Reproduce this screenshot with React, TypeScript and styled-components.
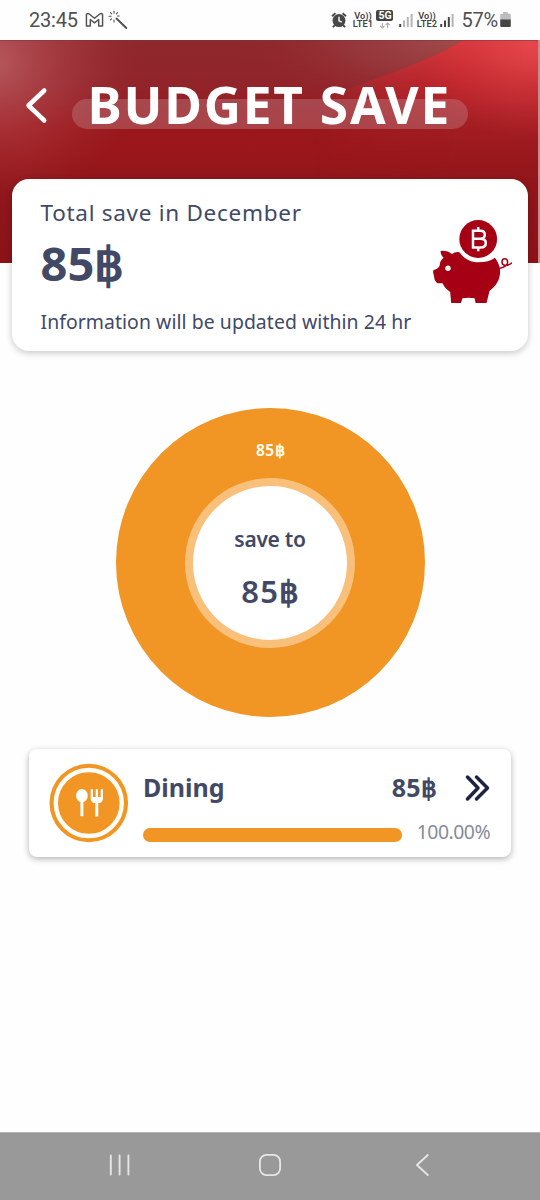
import React from "react";
import styled, { createGlobalStyle } from "styled-components";

const Global = createGlobalStyle`
  *, *::before, *::after { box-sizing: border-box; }
  body { margin: 0; background: #fff; font-family: "Noto Sans", "Open Sans", sans-serif; }
  svg { display: block; flex: none; }
`;

const Screen = styled.div`
  width: 540px;
  height: 1200px;
  display: flex;
  flex-direction: column;
  background: #fefefe;
  overflow: hidden;
`;

const StatusBar = styled.div`
  height: 40px;
  flex: none;
  display: flex;
  justify-content: space-between;
  padding: 0 29px 0 29px;
  font-family: Roboto, sans-serif;
  color: #505050;
`;

const StatusGroup = styled.div`
  display: flex;
  align-items: center;
`;

const StatusText = styled.span<{ $spacing: number }>`
  font-size: 20px;
  line-height: 40px;
  letter-spacing: ${(p) => p.$spacing}px;
`;

const Header = styled.header`
  position: relative;
  height: 223px;
  width: 538px;
  flex: none;
  background: linear-gradient(#8e282d 0, #91242a 45px, #9a181c 85px, #99171a 115px, #90161a 145px, #8b1318 223px);
  box-shadow: 2px 0 0 #c98a8c;
`;

const HeaderArt = styled.svg`
  position: absolute;
  inset: 0;
`;

const TitleRow = styled.div`
  position: relative;
  display: flex;
  align-items: flex-start;
  padding: 46px 0 0 24px;
`;

const TitlePill = styled.div`
  width: 396px;
  height: 30px;
  margin: 13px 0 0 22px;
  border-radius: 15px;
  background: rgba(190, 125, 132, 0.43);
  display: flex;
  align-items: center;
  padding-left: 15.5px;
`;

const Title = styled.h1`
  margin: 0;
  padding-bottom: 21px;
  font-size: 51.5px;
  line-height: 60px;
  letter-spacing: 1.75px;
  font-weight: 700;
  color: #fff;
  white-space: nowrap;
`;

const SummaryCard = styled.section`
  position: relative;
  flex: none;
  width: 516px;
  height: 172px;
  margin: -84px 0 0 12px;
  padding: 17px 16px 0 28.5px;
  border-radius: 17px;
  background: #fff;
  box-shadow: 0 2px 7px rgba(0, 0, 0, 0.22);
  display: flex;
  justify-content: space-between;
  color: #414966;
  white-space: nowrap;
`;

const SummaryText = styled.div`
  display: flex;
  flex-direction: column;
`;

const SummaryLabel = styled.div`
  font-size: 22.5px;
  line-height: 33px;
  letter-spacing: 0.72px;
`;

const SummaryAmount = styled.div`
  font-size: 47px;
  line-height: 64px;
  font-weight: 700;
  margin-top: 2px;
`;

const SummaryNote = styled.div`
  font-size: 19.4px;
  line-height: 28px;
  letter-spacing: 0.07px;
  margin-top: 13px;
`;

const PiggyBox = styled.div`
  padding-top: 23px;
`;

const Donut = styled.div`
  flex: none;
  align-self: center;
  width: 309px;
  height: 309px;
  margin-top: 57px;
  border-radius: 50%;
  background: #f19524;
  display: flex;
  flex-direction: column;
  align-items: center;
`;

const SliceLabel = styled.div`
  margin-top: 30px;
  height: 40px;
  font-size: 15.5px;
  line-height: 24px;
  letter-spacing: 0.5px;
  padding-left: 1px;
  font-weight: 700;
  color: #fffbe6;
`;

const DonutHole = styled.div`
  width: 170px;
  height: 170px;
  border: 8px solid #f8c07b;
  border-radius: 50%;
  background: #fff;
  display: flex;
  flex-direction: column;
  align-items: center;
  color: #414966;
  white-space: nowrap;
`;

const HoleCaption = styled.div`
  margin-top: 38px;
  font-size: 21px;
  line-height: 30px;
  font-weight: 600;
  letter-spacing: -0.3px;
`;

const HoleAmount = styled.div`
  margin-top: 17px;
  font-size: 31px;
  line-height: 40px;
  font-weight: 600;
  letter-spacing: 1.4px;
  padding-left: 2px;
`;

const CategoryCard = styled.section`
  flex: none;
  width: 482px;
  height: 108px;
  margin: 32px 0 0 29px;
  padding: 14px 21px 0 20px;
  border-radius: 8px;
  background: #fff;
  box-shadow: 0 2px 6px rgba(0, 0, 0, 0.3);
  display: flex;
  gap: 14px;
`;

const CategoryBody = styled.div`
  flex: 1;
  color: #414966;
`;

const CategoryLine = styled.div`
  display: flex;
  align-items: center;
  height: 50px;
  font-size: 25px;
  font-weight: 700;
`;

const CategoryName = styled.span`
  flex: 1;
  padding-bottom: 2px;
`;

const CategoryAmount = styled.span`
  padding-bottom: 2px;
  margin-right: 28px;
  letter-spacing: 0.2px;
`;

const ProgressLine = styled.div`
  display: flex;
  align-items: center;
  justify-content: space-between;
  margin-top: 3px;
  height: 31px;
`;

const Track = styled.div`
  width: 259px;
  height: 14px;
  margin-top: 7px;
  border-radius: 7px;
  background: #eee;
`;

const Fill = styled.div`
  height: 100%;
  border-radius: 7px;
  background: #f19524;
`;

const Percent = styled.span`
  font-size: 19.4px;
  line-height: 26px;
  letter-spacing: -0.5px;
  color: #858b9c;
`;

const NavBar = styled.nav`
  flex: none;
  height: 68px;
  margin-top: auto;
  border-top: 1px solid #b4b4b4;
  background: #999;
  display: flex;
  align-items: center;
  justify-content: space-between;
  padding: 0 110px 3px 108px;
`;

const HomeSlot = styled.div`
  margin-right: 6px;
`;

const MailIcon = () => (
  <svg width="19" height="16" viewBox="0 0 20 16" fill="none" stroke="#505050" strokeWidth="1.5" strokeLinejoin="round">
    <path d="M1.5 2.2Q2.6 .6 4.4 1.7L10 6.2 15.6 1.7Q17.4 .6 18.5 2.2V14.3H14.4V7.5L10 11 5.6 7.5V14.3H1.5Z" />
  </svg>
);

const WandIcon = () => (
  <svg width="21" height="20" viewBox="0 0 21 20" fill="none" stroke="#505050" strokeLinecap="round">
    <path d="M8.5 8.5L18.3 18" strokeWidth="1.9" />
    <path d="M6 1V3.2M6 10V12M1 6.2H3M9.5 6H11.2M2.4 2.6L3.7 3.8M9.5 2.6L8.4 3.8M2.4 9.9L3.6 8.8" strokeWidth="1.1" />
  </svg>
);

const AlarmIcon = () => (
  <svg width="16" height="16" viewBox="0 0 16 16">
    <circle cx="8" cy="8.6" r="6.5" fill="#484848" />
    <path d="M1 4.3L4.4 1.3M15 4.3L11.6 1.3M3.8 13.2L2 15.2M12.2 13.2L14 15.2" stroke="#484848" strokeWidth="1.9" />
    <path d="M8 4.8V8.8L10.8 10.2" stroke="#fff" strokeWidth="1.4" fill="none" />
  </svg>
);

const LteBox = styled.div`
  width: 21px;
  font-size: 9.3px;
  line-height: 8.5px;
  font-weight: 600;
  text-align: center;
  color: #454545;
`;

const FiveG = styled.div`
  display: flex;
  flex-direction: column;
  align-items: center;
  gap: 1px;
  width: 17px;
  margin: 0 6px 2px 2px;
`;

const FiveGBadge = styled.div`
  width: 17px;
  height: 11px;
  border-radius: 2px;
  background: #444;
  color: #fff;
  font-size: 10.5px;
  line-height: 11px;
  font-weight: 700;
  text-align: center;
`;

const Spacer = styled.div<{ $w: number }>`
  width: ${(p) => p.$w}px;
  flex: none;
`;

const Arrows = () => (
  <svg width="14" height="7" viewBox="0 0 14 8" fill="none" stroke="#aaa" strokeWidth="1.2">
    <path d="M4 1V7M1.5 4.5L4 7 6.5 4.5M10 7V1M7.5 3.5L10 1 12.5 3.5" />
  </svg>
);

const Signal = ({ level }: { level: number }) => (
  <svg width="14" height="14" viewBox="0 0 14 14">
    {[3, 6.5, 10, 13].map((h, i) => (
      <rect key={h} x={0.2 + i * 3.8} y={14 - h} width="2" height={h} fill={i < level ? "#454545" : "#b5b5b5"} />
    ))}
  </svg>
);

const Battery = () => (
  <svg width="11" height="16" viewBox="0 0 11 16">
    <path d="M3.2 0H7.8V1.7H9.5Q10.8 1.7 10.8 3V8H.2V3Q.2 1.7 1.5 1.7H3.2Z" fill="#bdbdbd" />
    <path d="M.2 7.5H10.8V13.7Q10.8 15 9.5 15H1.5Q.2 15 .2 13.7Z" fill="#444" />
  </svg>
);

const HeaderBackdrop = () => (
  <HeaderArt width="538" height="223" viewBox="0 0 538 223">
    <defs>
      <radialGradient id="leftGlow" gradientUnits="userSpaceOnUse" cx="0" cy="0" r="1" gradientTransform="translate(-8 22) scale(150 145)">
        <stop offset="0" stopColor="#c1666a" stopOpacity=".8" />
        <stop offset=".5" stopColor="#b64c52" stopOpacity=".42" />
        <stop offset="1" stopColor="#a03038" stopOpacity="0" />
      </radialGradient>
      <radialGradient id="sheen" gradientUnits="userSpaceOnUse" cx="0" cy="0" r="1" gradientTransform="translate(460 0) scale(220 75)">
        <stop offset="0" stopColor="#a3504f" stopOpacity=".9" />
        <stop offset=".5" stopColor="#9b4043" stopOpacity=".6" />
        <stop offset="1" stopColor="#93282d" stopOpacity="0" />
      </radialGradient>
      <linearGradient id="red" gradientUnits="userSpaceOnUse" x1="0" y1="0" x2="0" y2="140">
        <stop offset="0" stopColor="#d9363c" />
        <stop offset=".3" stopColor="#bf252b" />
        <stop offset=".62" stopColor="#a41e22" stopOpacity=".85" />
        <stop offset="1" stopColor="#951a1e" stopOpacity="0" />
      </linearGradient>
      <linearGradient id="fadeX" gradientUnits="userSpaceOnUse" x1="315" y1="0" x2="460" y2="0">
        <stop offset="0" stopColor="#fff" stopOpacity="0" />
        <stop offset=".5" stopColor="#fff" stopOpacity=".7" />
        <stop offset="1" stopColor="#fff" />
      </linearGradient>
      <mask id="fade">
        <rect width="538" height="223" fill="url(#fadeX)" />
      </mask>
      <radialGradient id="corner" gradientUnits="userSpaceOnUse" cx="0" cy="0" r="1" gradientTransform="translate(530 5) scale(110 95)">
        <stop offset="0" stopColor="#ea4d50" stopOpacity=".75" />
        <stop offset="1" stopColor="#d0383e" stopOpacity="0" />
      </radialGradient>
    </defs>
    <rect width="538" height="223" fill="url(#leftGlow)" />
    <path d="M230 0H538V80H230Z" fill="url(#sheen)" />
    <path d="M464 0Q430 20 375 39Q345 50 315 62V160H538V0Z" fill="url(#red)" mask="url(#fade)" />
    <path d="M464 0Q445 12 415 25V125H538V0Z" fill="url(#corner)" />
    <rect width="538" height="1" fill="#7c3338" opacity=".5" />
  </HeaderArt>
);

const BackArrow = () => (
  <svg width="26" height="38" viewBox="0 0 26 38" fill="none" stroke="#fff" strokeWidth="4.5" strokeLinecap="round" strokeLinejoin="round">
    <path d="M20.3 4.5L4.5 19.5 20.3 34.5" />
  </svg>
);

const PiggyBank = () => (
  <svg width="80" height="86" viewBox="432 219 80 86">
    <path
      d="M440.5 251Q447 249.8 452 254Q455.5 251.2 459.5 252.2C464 259 471 262.3 478.3 262.3C485.5 262.3 491 260.8 495 257.8C498 262 499.8 266 500.1 271C500.3 280 496 286 489.5 291L486.5 303H475.6L474.6 298.2Q468.5 297.2 462.4 298.2L461 303H451.2L450.2 292C446 289 443.8 286.5 442.6 283.2H437.5Q434.3 281 434.2 277L433 271.8Q433 269.8 435 269.6Q439.5 268.2 439.8 264.5C440 261.5 441.8 259 443.6 257.8Q440.8 255.5 440.5 251Z"
      fill="#a60014"
    />
    <circle cx="448" cy="268.2" r="2.7" fill="#fff" />
    <circle cx="478.2" cy="239" r="18.9" fill="#a60014" />
    <path
      d="M499 268.5C504.5 267.3 508 265.5 507.6 261.8C507.2 257.8 502.4 257.8 502 261.6C501.8 265.5 506 267 512 262.8"
      fill="none"
      stroke="#a60014"
      strokeWidth="1.5"
    />
    <path
      d="M471.8 230.8H480.5Q484.8 230.8 484.8 234.8Q484.8 238.7 480.5 238.7H473M480.5 238.7Q485.8 238.7 485.8 243Q485.8 247.5 480.5 247.5H471.8M473 230.8V247.5M478.2 227V231.5M478.2 247.2V251.3"
      fill="none"
      stroke="#fff"
      strokeWidth="2.5"
    />
  </svg>
);

const DiningIcon = () => (
  <svg width="80" height="80" viewBox="49 762.5 80 80">
    <circle cx="88.8" cy="802.5" r="39.3" fill="#f19524" />
    <circle cx="88.8" cy="802.5" r="33" fill="none" stroke="#fffdf7" strokeWidth="4.4" />
    <ellipse cx="81.9" cy="795.2" rx="5.9" ry="6.6" fill="#fff" />
    <path d="M81.9 800V815.8M96.8 801V816" stroke="#fff" strokeWidth="3" />
    <path d="M90.7 788.7V797.5Q90.7 802.5 95 802.5H98.7Q103 802.5 103 797.5V788.7H100.7V796.5H98V788.7H95.7V796.5H93V788.7Z" fill="#fff" />
  </svg>
);

const DoubleChevron = () => (
  <svg width="25" height="28" viewBox="0 0 25 28" fill="none" stroke="#1d2340" strokeWidth="3.5" strokeLinecap="round" strokeLinejoin="round">
    <path d="M2.5 3L13 14 2.5 25M11.5 3L22.5 14 11.5 25" />
  </svg>
);

const RecentsIcon = () => (
  <svg width="23" height="24" viewBox="0 0 23 24" stroke="#e6e6e6" strokeWidth="1.9" strokeLinecap="round">
    <path d="M2.8 2.5V21.5M11.6 2.5V21.5M20.4 2.5V21.5" />
  </svg>
);

const HomeIcon = () => (
  <svg width="24" height="24" viewBox="0 0 24 24" fill="none" stroke="#e6e6e6" strokeWidth="1.8">
    <rect x="1.9" y="1.9" width="20.2" height="20.2" rx="6.5" />
  </svg>
);

const NavBackIcon = () => (
  <svg width="15" height="24" viewBox="0 0 15 24" fill="none" stroke="#e6e6e6" strokeWidth="1.9" strokeLinecap="round" strokeLinejoin="round">
    <path d="M12.8 2L2 12 12.8 22" />
  </svg>
);

const LteLabel = ({ sim }: { sim: number }) => <LteBox>{`Vo)) LTE${sim}`}</LteBox>;

export default function App() {
  const category = { name: "Dining", amount: 85, share: 100 };
  return (
    <>
      <Global />
      <Screen>
        <StatusBar>
          <StatusGroup>
            <StatusText $spacing={-0.2}>23:45</StatusText>
            <Spacer $w={7} />
            <MailIcon />
            <Spacer $w={4} />
            <WandIcon />
          </StatusGroup>
          <StatusGroup>
            <AlarmIcon />
            <Spacer $w={5} />
            <LteLabel sim={1} />
            <Spacer $w={1} />
            <FiveG>
              <FiveGBadge>5G</FiveGBadge>
              <Arrows />
            </FiveG>
            <Signal level={1} />
            <Spacer $w={3} />
            <LteLabel sim={2} />
            <Spacer $w={3} />
            <Signal level={3} />
            <Spacer $w={7} />
            <StatusText $spacing={-0.2}>57%</StatusText>
            <Spacer $w={2} />
            <Battery />
          </StatusGroup>
        </StatusBar>

        <Header>
          <HeaderBackdrop />
          <TitleRow>
            <BackArrow />
            <TitlePill>
              <Title>BUDGET SAVE</Title>
            </TitlePill>
          </TitleRow>
        </Header>

        <SummaryCard>
          <SummaryText>
            <SummaryLabel>Total save in December</SummaryLabel>
            <SummaryAmount>85฿</SummaryAmount>
            <SummaryNote>Information will be updated within 24 hr</SummaryNote>
          </SummaryText>
          <PiggyBox>
            <PiggyBank />
          </PiggyBox>
        </SummaryCard>

        <Donut>
          <SliceLabel>85฿</SliceLabel>
          <DonutHole>
            <HoleCaption>save to</HoleCaption>
            <HoleAmount>85฿</HoleAmount>
          </DonutHole>
        </Donut>

        <CategoryCard>
          <DiningIcon />
          <CategoryBody>
            <CategoryLine>
              <CategoryName>{category.name}</CategoryName>
              <CategoryAmount>{category.amount}฿</CategoryAmount>
              <DoubleChevron />
            </CategoryLine>
            <ProgressLine>
              <Track>
                <Fill style={{ width: `${category.share}%` }} />
              </Track>
              <Percent>{category.share.toFixed(2)}%</Percent>
            </ProgressLine>
          </CategoryBody>
        </CategoryCard>

        <NavBar>
          <RecentsIcon />
          <HomeSlot>
            <HomeIcon />
          </HomeSlot>
          <NavBackIcon />
        </NavBar>
      </Screen>
    </>
  );
}
